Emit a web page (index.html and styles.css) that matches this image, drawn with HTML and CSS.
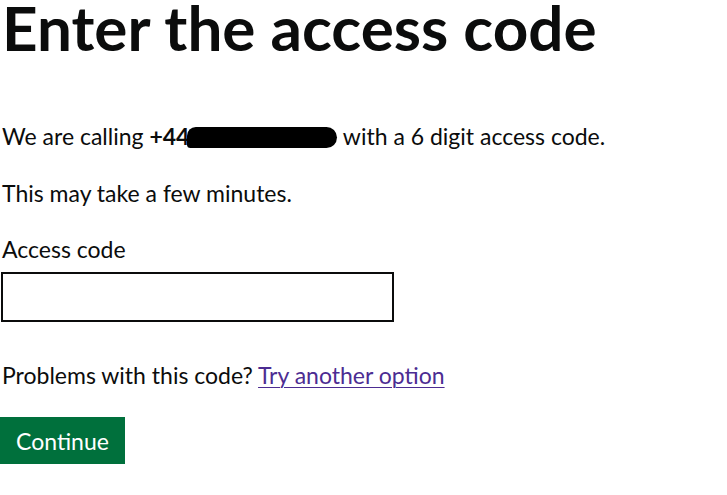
FILE: index.html
```html
<!DOCTYPE html>
<html lang="en">
<head>
<meta charset="utf-8">
<title>Enter the access code</title>
<link rel="stylesheet" href="styles.css">
</head>
<body>
<main class="page">
  <h1 class="heading">Enter the access code</h1>
  <p class="body">We are calling <strong class="phone">+44<span class="redact"></span></strong> with a 6 digit access code.</p>
  <p class="body">This may take a few minutes.</p>
  <div class="field">
    <label class="label" for="code">Access code</label>
    <input class="input" id="code" type="text">
  </div>
  <p class="body problems">Problems with this code? <a class="link" href="#">Try another option</a></p>
  <button class="button" type="button">Continue</button>
</main>
</body>
</html>
```
FILE: styles.css
```css
html, body {
  margin: 0;
  padding: 0;
  background: #fff;
}
.page {
  padding: 0 0 0 2px;
  color: #0b0c0c;
  font-family: Lato, "Noto Sans", sans-serif;
}
.heading {
  margin: -6px 0 0 0;
  font-size: 62px;
  line-height: 66px;
  font-weight: 700;
}
.body {
  margin: 0;
  font-size: 23px;
  line-height: 32px;
  font-weight: 400;
}
.body + .body { margin-top: 25px; }
.heading + .body { margin-top: 60px; }
.phone { font-weight: 700; }
.redact {
  display: inline-block;
  width: 150px;
  height: 21px;
  margin-left: -2px;
  background: #000;
  border-radius: 10px 12px 12px 4px;
  vertical-align: -3px;
}
.field {
  display: flex;
  flex-direction: column;
  align-items: flex-start;
  margin-top: 24px;
}
.label {
  font-size: 23px;
  line-height: 32px;
}
.input {
  box-sizing: border-box;
  width: 393px;
  height: 50px;
  margin: 7px 0 0 -1px;
  border: 2px solid #0b0c0c;
  border-radius: 0;
  font: inherit;
  font-size: 23px;
  padding: 6px;
}
.problems { margin-top: 37px; }
.link {
  color: #4c2c92;
  text-decoration: underline;
  text-decoration-thickness: 1px;
  text-underline-offset: 3px;
}
.button {
  margin: 26px 0 0 -2px;
  background: #00703c;
  color: #fff;
  border: 0;
  border-radius: 0;
  box-shadow: 0 2px 0 #002d18;
  font-family: Lato, "Noto Sans", sans-serif;
  font-size: 23px;
  line-height: 30px;
  padding: 8px 15px;
  width: 125px;
  height: 47px;
}
```
